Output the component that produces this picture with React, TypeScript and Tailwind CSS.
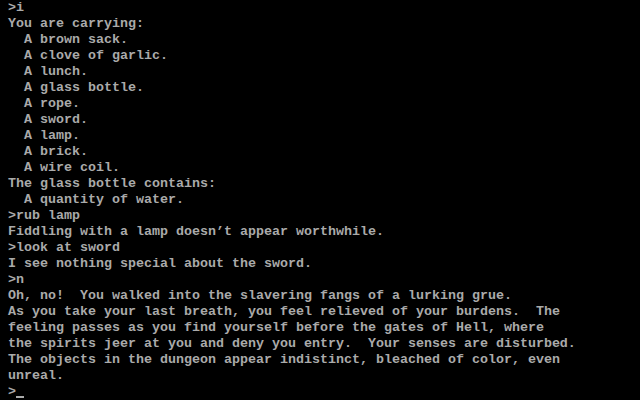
import React from "react";

const lines = [
  ">i",
  "You are carrying:",
  "  A brown sack.",
  "  A clove of garlic.",
  "  A lunch.",
  "  A glass bottle.",
  "  A rope.",
  "  A sword.",
  "  A lamp.",
  "  A brick.",
  "  A wire coil.",
  "The glass bottle contains:",
  "  A quantity of water.",
  ">rub lamp",
  "Fiddling with a lamp doesn\u2019t appear worthwhile.",
  ">look at sword",
  "I see nothing special about the sword.",
  ">n",
  "Oh, no!  You walked into the slavering fangs of a lurking grue.",
  "As you take your last breath, you feel relieved of your burdens.  The",
  "feeling passes as you find yourself before the gates of Hell, where",
  "the spirits jeer at you and deny you entry.  Your senses are disturbed.",
  "The objects in the dungeon appear indistinct, bleached of color, even",
  "unreal.",
];

export default function App() {
  return (
    <div className="w-[640px] h-[400px] bg-black overflow-hidden pl-[8px] text-[#aaaaaa] font-['Liberation_Mono',monospace] text-[13.333px] leading-[16px] font-bold">
      {lines.map((l, i) => (
        <div key={i} className="h-[16px] whitespace-pre">
          {l}
        </div>
      ))}
      <div className="h-[16px] flex whitespace-pre">
        <span>{">"}</span>
        <span className="w-[8px] h-[16px] flex flex-col justify-end pb-[2px]">
          <span className="block w-[8px] h-[2px] bg-[#aaaaaa]" />
        </span>
      </div>
    </div>
  );
}
